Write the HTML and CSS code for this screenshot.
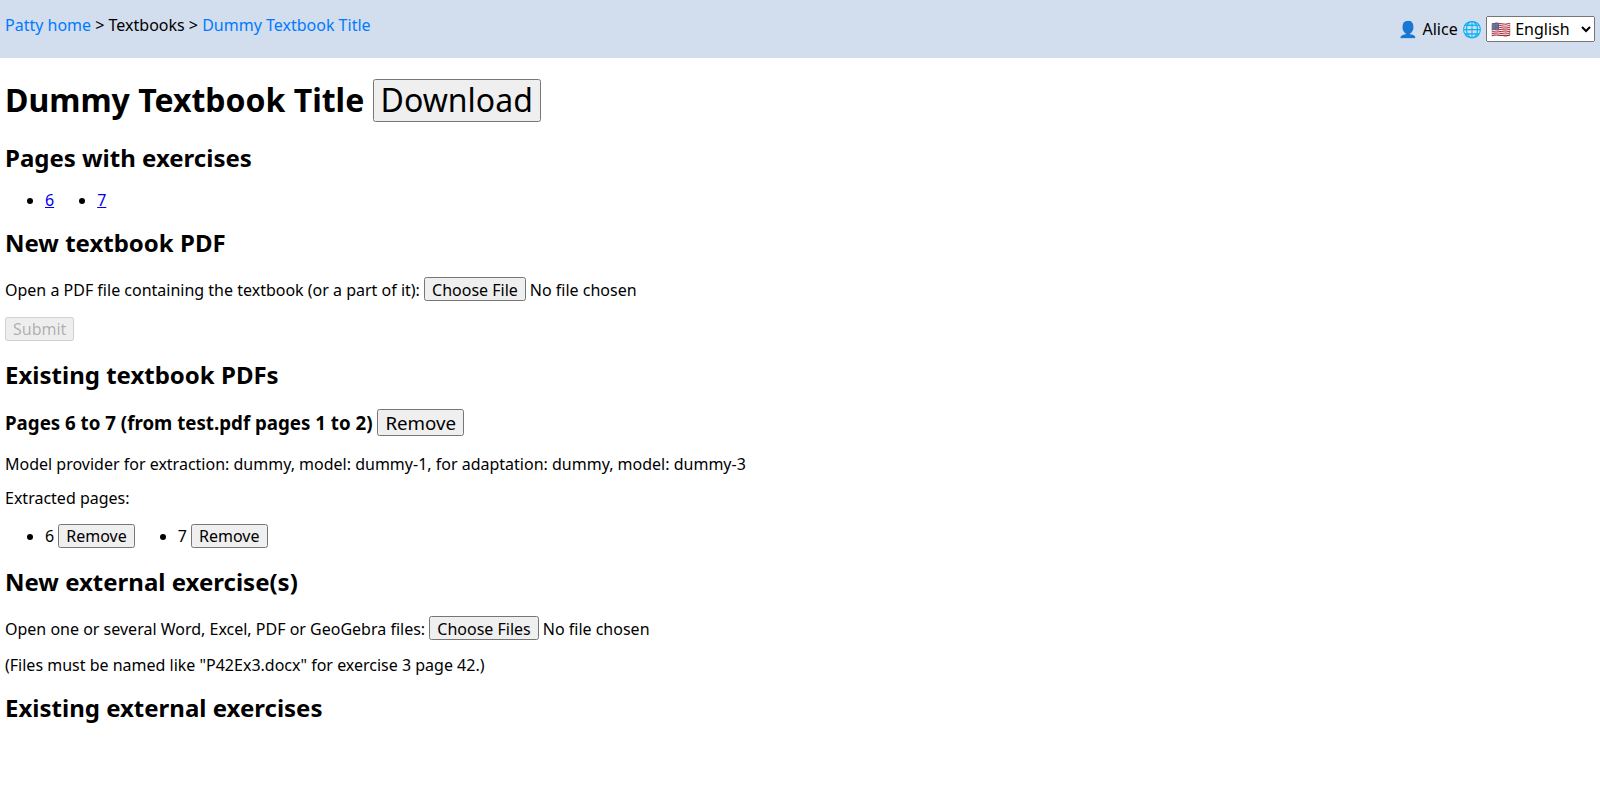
FILE: index.html
```html
<!DOCTYPE html>
<html lang="en">
<head>
<meta charset="utf-8">
<title>Patty - Dummy Textbook Title</title>
<link rel="stylesheet" href="styles.css">
</head>
<body>
<header class="topbar">
  <nav class="breadcrumbs"><a class="nav-link" href="#">Patty home</a> &gt; Textbooks &gt; <a class="nav-link" href="#">Dummy Textbook Title</a></nav>
  <div class="account">👤 Alice <label for="language">🌐</label> <select id="language"><option>🇺🇸 English</option><option>🇫🇷 Français</option></select></div>
</header>
<main class="content">
  <h1>Dummy Textbook Title <button>Download</button></h1>
  <h2>Pages with exercises</h2>
  <ul class="pages">
    <li><a href="#">6</a></li>
    <li><a href="#">7</a></li>
  </ul>
  <h2>New textbook PDF</h2>
  <p><label>Open a PDF file containing the textbook (or a part of it): <input type="file"></label></p>
  <p><button disabled>Submit</button></p>
  <h2>Existing textbook PDFs</h2>
  <h3>Pages 6 to 7 (from test.pdf pages 1 to 2) <button>Remove</button></h3>
  <p>Model provider for extraction: dummy, model: dummy-1, for adaptation: dummy, model: dummy-3</p>
  <p>Extracted pages:</p>
  <ul class="pages">
    <li>6 <button>Remove</button></li>
    <li>7 <button>Remove</button></li>
  </ul>
  <h2>New external exercise(s)</h2>
  <p><label>Open one or several Word, Excel, PDF or GeoGebra files: <input type="file" multiple></label></p>
  <p>(Files must be named like "P42Ex3.docx" for exercise 3 page 42.)</p>
  <h2>Existing external exercises</h2>
</main>
</body>
</html>
```
FILE: styles.css
```css
body {
  margin: 0;
  font-family: "Noto Sans", sans-serif;
  line-height: 1.15;
}

button,
input,
select {
  margin: 0;
  font-family: inherit;
  font-size: 100%;
  line-height: 1.15;
}

::file-selector-button {
  height: 24px;
  padding: 0 6px;
  font: inherit;
}

.topbar {
  display: flex;
  justify-content: space-between;
  padding: 0 5px;
  background: #d2dded;
}

.breadcrumbs,
.account {
  margin: 16px 0;
}

.nav-link {
  color: #007bff;
  text-decoration: none;
}

.content {
  padding: 0 5px;
}

.pages {
  display: flex;
  gap: 43px;
  padding-left: 40px;
}
```
